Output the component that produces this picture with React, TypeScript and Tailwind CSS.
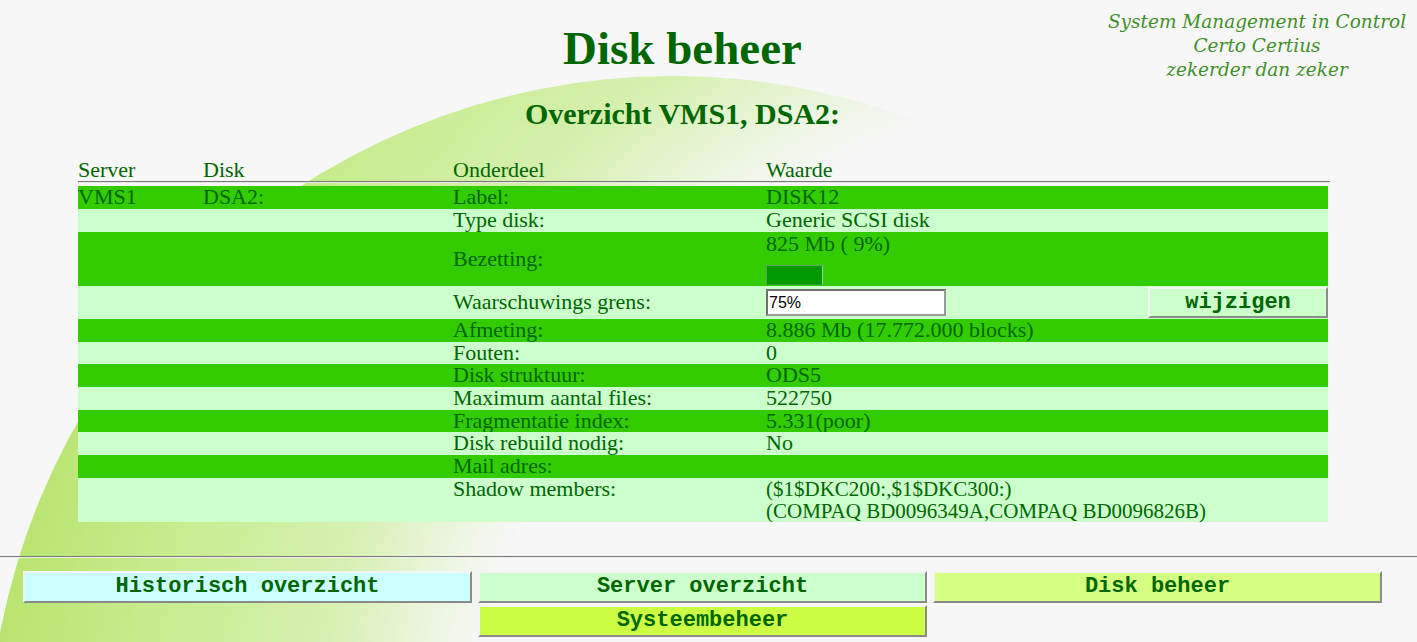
import React from "react";

type Row = {
  server?: string;
  disk?: string;
  label: string;
  value?: React.ReactNode;
  dark: boolean;
  kind?: "bar" | "input" | "multi";
  tall?: boolean;
};

const rows: Row[] = [
  { server: "VMS1", disk: "DSA2:", label: "Label:", value: "DISK12", dark: true, tall: true },
  { label: "Type disk:", value: "Generic SCSI disk", dark: false, tall: true },
  { label: "Bezetting:", dark: true, kind: "bar" },
  { label: "Waarschuwings grens:", dark: false, kind: "input" },
  { label: "Afmeting:", value: "8.886 Mb (17.772.000 blocks)", dark: true },
  { label: "Fouten:", value: "0", dark: false },
  { label: "Disk struktuur:", value: "ODS5", dark: true },
  { label: "Maximum aantal files:", value: "522750", dark: false },
  { label: "Fragmentatie index:", value: "5.331(poor)", dark: true },
  { label: "Disk rebuild nodig:", value: "No", dark: false },
  { label: "Mail adres:", value: "", dark: true },
  { label: "Shadow members:", dark: false, kind: "multi" },
];

const btn =
  "h-[32px] w-full border-2 border-t-[#f4f4f4] border-l-[#f4f4f4] border-b-[#8a8a8a] border-r-[#8a8a8a] font-['Liberation_Mono',monospace] font-bold text-[22px] leading-none text-[#006600]";

export default function App() {
  return (
    <div className="relative min-h-[642px] w-full overflow-hidden bg-[#f7f7f7] font-['Liberation_Serif',serif] text-[#006600]">
      {/* decorative ball */}
      <div
        aria-hidden
        className="pointer-events-none absolute left-[-12px] top-[76px] h-[1370px] w-[1370px] rounded-full bg-[radial-gradient(circle_1160px_at_85%_50%,#f7f7f7_0%,#f7f7f7_58%,#eaf5dc_64%,#d6f0b0_72%,#c8ec90_86%,#b8e46e_100%)]"
      />
      {/* logo text */}
      <div className="absolute right-[0px] top-[10px] w-[320px] text-center font-['DejaVu_Serif',serif] text-[18.5px] italic leading-[24px] text-[#3f8f2a]">
        <div>System Management in Control</div>
        <div>Certo Certius</div>
        <div>zekerder dan zeker</div>
      </div>

      <div className="relative flex flex-col">
        <div className="w-[1365px] pt-[22px] text-center">
          <h1 className="text-[47px] font-bold leading-[52px] text-[#006600]">Disk beheer</h1>
          <h2 className="mt-[24px] text-[30px] font-bold leading-[32px] text-[#006600]">
            Overzicht VMS1, DSA2:
          </h2>
        </div>

        <div className="ml-[78px] mt-[28px] w-[1250px] text-[22px]">
          <div className="grid grid-cols-[125px_250px_313px_1fr] leading-[23px]">
            <div>Server</div>
            <div>Disk</div>
            <div>Onderdeel</div>
            <div>Waarde</div>
          </div>
          <div className="h-[2px] w-[1252px] border-t border-l border-t-[#777] border-l-[#777] border-b border-b-[#e8e8e8]" />
          <div className="mt-[3px] flex flex-col">
            {rows.map((r, i) => {
              const h =
                r.kind === "bar"
                  ? "h-[54px]"
                  : r.kind === "input"
                  ? "h-[33px]"
                  : r.kind === "multi"
                  ? "h-[44px]"
                  : r.tall
                  ? "h-[23px]"
                  : "h-[22.7px]";
              return (
                <div
                  key={i}
                  className={`grid grid-cols-[125px_250px_313px_1fr] ${h} ${
                    r.dark ? "bg-[#33cc00]" : "bg-[#ccffcc]"
                  } leading-[22.7px]`}
                >
                  <div>{r.server}</div>
                  <div>{r.disk}</div>
                  <div
                    className={
                      r.kind === "bar" || r.kind === "input"
                        ? "flex items-center"
                        : ""
                    }
                  >
                    {r.label}
                  </div>
                  <div>
                    {r.kind === "bar" && (
                      <div className="flex flex-col">
                        <div className="leading-[23px]">825 Mb ( 9%)</div>
                        <div className="mt-[10px] h-[20px] w-[57px] border border-t-[#5aa85a] border-l-[#5aa85a] border-b-[#2f9a2f] border-r-[#8fd88f] bg-[#009900]" />
                      </div>
                    )}
                    {r.kind === "input" && (
                      <div className="flex h-full items-center justify-between">
                        <input
                          readOnly
                          value="75%"
                          className="h-[27px] w-[180px] border-2 border-t-[#6f6f6f] border-l-[#6f6f6f] border-b-[#9a9a9a] border-r-[#9a9a9a] bg-white px-[1px] font-['Liberation_Sans',sans-serif] text-[16px] text-black outline-none"
                        />
                        <button
                          className={`${btn} !h-[31px] !w-[180px] bg-[#ccffcc]`}
                        >
                          wijzigen
                        </button>
                      </div>
                    )}
                    {r.kind === "multi" && (
                      <div className="text-[21px] leading-[22px]">
                        <div>($1$DKC200:,$1$DKC300:)</div>
                        <div>(COMPAQ BD0096349A,COMPAQ BD0096826B)</div>
                      </div>
                    )}
                    {!r.kind && r.value}
                  </div>
                </div>
              );
            })}
          </div>
        </div>

        <div className="mt-[34px] h-[2px] w-full border-t border-t-[#7a7a7a] border-b border-b-[#ececec]" />

        <div className="ml-[23px] mt-[13px] grid w-[1359px] grid-cols-[449px_449px_449px] gap-x-[6px] gap-y-[2px]">
          <button className={`${btn} bg-[#ccffff]`}>Historisch overzicht</button>
          <button className={`${btn} bg-[#ccffcc]`}>Server overzicht</button>
          <button className={`${btn} bg-[#d4ff80]`}>Disk beheer</button>
          <div />
          <button className={`${btn} bg-[#ccff44]`}>Systeembeheer</button>
        </div>
      </div>
    </div>
  );
}
